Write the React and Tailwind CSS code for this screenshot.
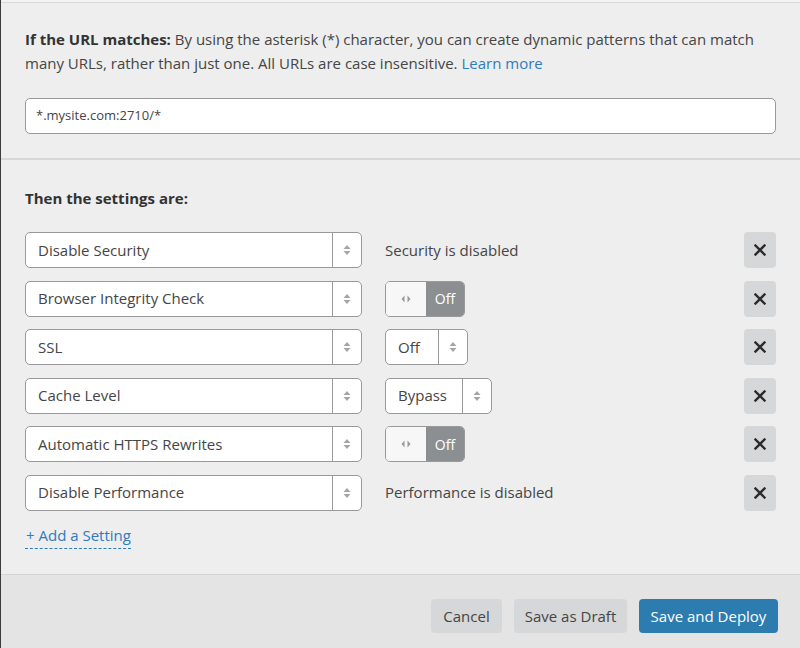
import React from "react";

const Arrows = () => (
  <svg width="8" height="12" viewBox="0 0 8 12" className="block">
    <path d="M4 1 L7.5 5 L0.5 5 Z" fill="#a6a6a6" />
    <path d="M4 11 L7.5 7 L0.5 7 Z" fill="#a6a6a6" />
  </svg>
);

const Select = ({ label, w }) => (
  <div
    className="flex h-[36px] items-stretch rounded-[5px] border border-[#999] bg-white text-[15px] text-[#454545]"
    style={{ width: w }}
  >
    <div className="flex flex-1 items-center pl-[12px]">{label}</div>
    <div className="flex w-[29px] items-center justify-center border-l border-[#999]">
      <Arrows />
    </div>
  </div>
);

const Toggle = () => (
  <div className="flex h-[36px] w-[80px] overflow-hidden rounded-[5px] border border-[#999]">
    <div className="flex w-[40px] items-center justify-center bg-[#f7f7f7]">
      <svg width="10" height="8" viewBox="0 0 10 8">
        <path d="M3.5 0.5 L0.5 4 L3.5 7.5 Z" fill="#9a9a9a" />
        <path d="M6.5 0.5 L9.5 4 L6.5 7.5 Z" fill="#9a9a9a" />
      </svg>
    </div>
    <div className="flex flex-1 items-center justify-center bg-[#8b8f91] text-[14px] text-white">
      Off
    </div>
  </div>
);

const XBtn = () => (
  <div className="flex h-[36px] w-[32px] items-center justify-center rounded-[4px] bg-[#d6d7d8]">
    <svg width="12" height="12" viewBox="0 0 12 12">
      <path d="M1.5 1.5 L10.5 10.5 M10.5 1.5 L1.5 10.5" stroke="#2b2b2b" strokeWidth="2.4" strokeLinecap="square" />
    </svg>
  </div>
);

const rows = [
  { label: "Disable Security", value: <span className="text-[15px] text-[#454545]">Security is disabled</span> },
  { label: "Browser Integrity Check", value: <Toggle /> },
  { label: "SSL", value: <Select label="Off" w={83} /> },
  { label: "Cache Level", value: <Select label="Bypass" w={107} /> },
  { label: "Automatic HTTPS Rewrites", value: <Toggle /> },
  { label: "Disable Performance", value: <span className="text-[15px] text-[#454545]">Performance is disabled</span> },
];

export default function App() {
  return (
    <div
      className="flex h-[648px] w-[800px] flex-col border-l border-[#3a3d40] bg-[#edeeed] text-[#454545]"
      style={{ fontFamily: '"Open Sans", "Noto Sans", sans-serif' }}
    >
      <div className="h-[2px] bg-[#f2f2f2]" />
      <div className="border-t border-[#d8d9d8] px-[24px] pb-[24px] pt-[24px]">
        <p className="text-[15px] leading-[24px] text-[#454545]">
          <b className="font-bold text-[#333]">If the URL matches:</b> By using the asterisk (*) character, you can create dynamic patterns that can match many URLs, rather than just one. All URLs are case insensitive.{" "}
          <span className="text-[#2f7bbf]">Learn more</span>
        </p>
        <div className="mt-[23px] flex h-[36px] items-center rounded-[5px] border border-[#999] bg-white pl-[10px] text-[13px] text-[#454545]">
          *.mysite.com:2710/*
        </div>
      </div>
      <div className="h-[2px] bg-[#d6d7d6]" />
      <div className="flex-1 px-[24px] pt-[26px]">
        <div className="text-[15px] font-bold leading-[24px] text-[#333]">Then the settings are:</div>
        <div className="mt-[22px] flex flex-col gap-[12.5px]">
          {rows.map((r, i) => (
            <div key={i} className="flex items-center">
              <Select label={r.label} w={337} />
              <div className="ml-[23px] flex flex-1 items-center">{r.value}</div>
              <XBtn />
            </div>
          ))}
        </div>
        <div className="mt-[12px]">
          <span className="inline-block border-b border-dashed border-[#2f7bbf] pb-[3px] pl-[1px] text-[15px] leading-[20px] text-[#2f7bbf]">
            + Add a Setting
          </span>
        </div>
      </div>
      <div className="flex h-[74px] items-start justify-end gap-[12px] border-t border-[#d4d5d4] bg-[#e4e4e4] px-[22px] pt-[24px]">
        <div className="flex h-[34px] w-[71px] items-center justify-center rounded-[4px] bg-[#d6d7d8] text-[15px] text-[#454545]">Cancel</div>
        <div className="flex h-[34px] w-[113px] items-center justify-center rounded-[4px] bg-[#d6d7d8] text-[15px] text-[#454545]">Save as Draft</div>
        <div className="flex h-[34px] w-[139px] items-center justify-center rounded-[4px] bg-[#2c7cb0] text-[15px] text-white">Save and Deploy</div>
      </div>
    </div>
  );
}
